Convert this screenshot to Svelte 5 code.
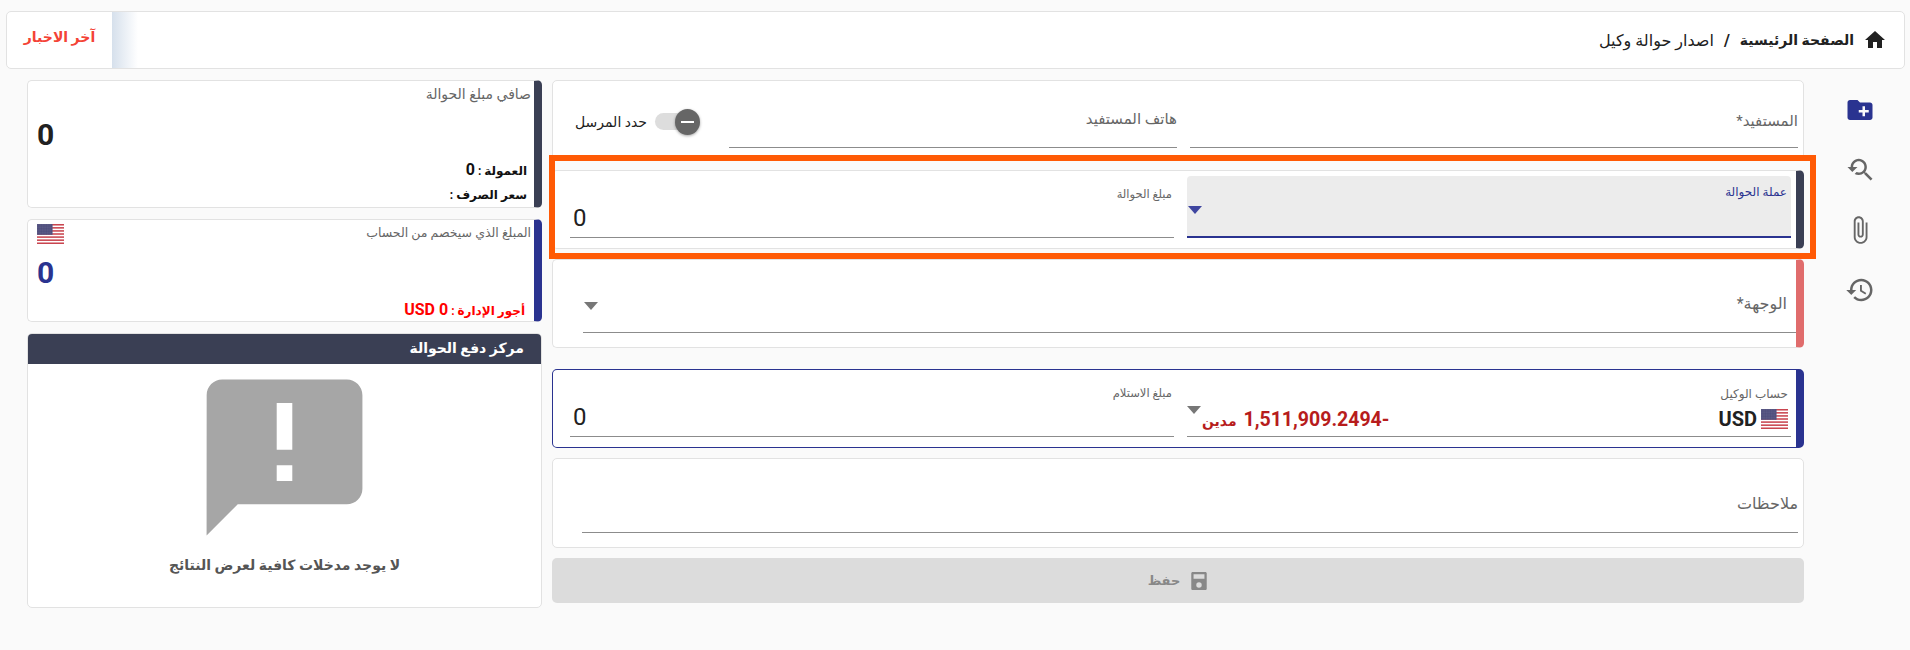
<script>
  const stripes = [0, 1, 2, 3, 4, 5, 6];
</script>

{#snippet flag()}
  <svg class="flag" viewBox="0 0 26 20" preserveAspectRatio="none" aria-hidden="true">
    <defs>
      <pattern id="stars" width="1.6" height="1.6" patternUnits="userSpaceOnUse">
        <rect width="1.6" height="1.6" fill="#3c3b6e" />
        <rect x="0.4" y="0.4" width="0.7" height="0.7" fill="#b9bad0" />
      </pattern>
    </defs>
    <rect width="26" height="20" fill="#fff" />
    {#each stripes as s}
      <rect y={s * 3.08} width="26" height="1.54" fill="#c9454f" />
    {/each}
    <rect width="15" height="10.8" fill="url(#stars)" />
  </svg>
{/snippet}

<div class="page" dir="rtl">
  <header class="topbar">
    <nav class="crumbs">
      <svg class="home" viewBox="0 0 24 24"><path d="M10 20v-6h4v6h5v-8h3L12 3 2 12h3v8z" /></svg>
      <b>الصفحة الرئيسية</b>
      <span class="sep">/</span>
      <span class="current">اصدار حوالة وكيل</span>
    </nav>
    <div class="fade"></div>
    <div class="news">آخر الاخبار</div>
  </header>

  <div class="content">
    <aside class="rail">
      <svg class="navy" viewBox="0 0 24 24"><path d="M20 6h-8l-2-2H4c-1.11 0-1.99.89-1.99 2L2 18c0 1.11.89 2 2 2h16c1.11 0 2-.89 2-2V8c0-1.11-.89-2-2-2zm-1 8h-3v3h-2v-3h-3v-2h3V9h2v3h3v2z" /></svg>
      <svg viewBox="0 0 24 24"><path d="M17.01 14h-.8l-.27-.27c.98-1.14 1.57-2.61 1.57-4.23 0-3.59-2.91-6.5-6.5-6.5s-6.5 3-6.5 6.5H2l3.84 4 4.16-4H6.51C6.51 7 8.53 5 11.01 5s4.5 2.01 4.5 4.5c0 2.48-2.02 4.5-4.5 4.5-.65 0-1.26-.14-1.82-.38L7.71 15.1c.97.57 2.09.9 3.3.9 1.61 0 3.08-.59 4.22-1.57l.27.27v.79l5.01 5L21.99 19l-4.98-5z" /></svg>
      <svg viewBox="0 0 24 24"><path d="M16.5 6v11.5c0 2.21-1.79 4-4 4s-4-1.79-4-4V5c0-1.38 1.12-2.5 2.5-2.5s2.5 1.12 2.5 2.5v10.5c0 .55-.45 1-1 1s-1-.45-1-1V6H10v9.5c0 1.38 1.12 2.5 2.5 2.5s2.5-1.12 2.5-2.5V5c0-2.21-1.79-4-4-4S7 2.79 7 5v12.5c0 3.04 2.46 5.5 5.5 5.5s5.5-2.46 5.5-5.5V6h-1.5z" /></svg>
      <svg viewBox="0 0 24 24"><path d="M13 3c-4.97 0-9 4.03-9 9H1l3.89 3.89.07.14L9 12H6c0-3.87 3.13-7 7-7s7 3.13 7 7-3.13 7-7 7c-1.93 0-3.68-.79-4.94-2.06l-1.42 1.42C8.27 19.99 10.51 21 13 21c4.97 0 9-4.03 9-9s-4.03-9-9-9zm-1 5v5l4.28 2.54.72-1.21-3.5-2.08V8H12z" /></svg>
    </aside>

    <main class="form">
      <section class="card beneficiary">
        <div class="field big wide"><label>المستفيد*</label></div>
        <div class="field big phone"><label>هاتف المستفيد</label></div>
        <div class="sender">
          <div class="toggle"><span class="track"></span><span class="knob"></span></div>
          <span>حدد المرسل</span>
        </div>
      </section>

      <div class="marked">
        <section class="card barred dark currency">
          <div class="field select focused">
            <label>عملة الحوالة</label>
            <span class="arrow"></span>
          </div>
          <div class="field amount">
            <label>مبلغ الحوالة</label>
            <div class="num">0</div>
          </div>
        </section>
        <div class="outline"></div>
      </div>

      <section class="card barred rose destination">
        <div class="field big full">
          <label>الوجهة*</label>
          <span class="arrow"></span>
        </div>
      </section>

      <section class="card barred navybar agent">
        <div class="field select">
          <label>حساب الوكيل</label>
          <div class="account">
            {@render flag()}
            <b class="usd">USD</b>
            <span class="balance"><b>-1,511,909.2494</b> <b class="debit">مدين</b></span>
          </div>
          <span class="arrow"></span>
        </div>
        <div class="field amount">
          <label>مبلغ الاستلام</label>
          <div class="num">0</div>
        </div>
      </section>

      <section class="card notes">
        <div class="field big full"><label>ملاحظات</label></div>
      </section>

      <button class="save" disabled>
        <svg viewBox="0 0 18 22"><path d="M2 1h14c.8 0 1.5.7 1.5 1.500v17c0 .8-.7 1.500-1.500 1.500H2c-.8 0-1.500-.7-1.500-1.500v-17C.5 1.700 1.200 1 2 1zm1 2.500v5h12v-5zM9 12.500a3 3 0 1 0 0 6 3 3 0 0 0 0-6z" /></svg>
        <span>حفظ</span>
      </button>
    </main>

    <aside class="summary">
      <section class="card barred dark net">
        <div class="title">صافي مبلغ الحوالة</div>
        <div class="total">0</div>
        <div class="meta">العمولة : <span class="digit">0</span></div>
        <div class="meta">سعر الصرف :</div>
      </section>

      <section class="card barred navybar deduct">
        <div class="title">المبلغ الذي سيخصم من الحساب</div>
        <div class="flagcorner">{@render flag()}</div>
        <div class="total blue">0</div>
        <div class="meta red">أجور الإدارة : <span class="digit" dir="ltr">USD 0</span></div>
      </section>

      <section class="card center">
        <h3>مركز دفع الحوالة</h3>
        <svg class="empty" viewBox="0 0 24 24"><path d="M20 2H4c-1.100 0-1.990.9-1.990 2L2 22l4-4h14c1.100 0 2-.9 2-2V4c0-1.100-.9-2-2-2zm-7 9h-2V5h2v6zm0 4h-2v-2h2v2z" /></svg>
        <p>لا يوجد مدخلات كافية لعرض النتائج</p>
      </section>
    </aside>
  </div>
</div>

<style>
  :global(body) {
    background: #fafafa;
    font-family: Roboto, "Liberation Sans", "DejaVu Sans", sans-serif;
    color: #212121;
  }

  .page {
    padding: 11px 5px 0 6px;
    height: 639px;
  }

  .topbar {
    height: 58px;
    box-sizing: border-box;
    background: #fff;
    border: 1px solid #e2e2e2;
    border-radius: 5px;
    display: flex;
    align-items: center;
    padding-right: 17px;
  }

  .crumbs {
    display: flex;
    align-items: center;
    gap: 10px;
    font-size: 14px;
    flex: 1;
  }

  .current {
    font-size: 16px;
  }

  .home {
    width: 24px;
    height: 24px;
    fill: #212121;
    margin-left: -1px;
  }

  .sep {
    font-weight: 700;
    font-size: 16px;
  }

  .fade {
    width: 26px;
    height: 100%;
    background: linear-gradient(to left, #fff, #d6e0ec);
  }

  .news {
    width: 105px;
    text-align: center;
    color: #f44336;
    font-size: 14px;
    font-weight: 700;
    padding-bottom: 6px;
  }

  .content {
    display: flex;
    margin-top: 11px;
    padding-left: 21px;
  }

  .rail {
    width: 101px;
    flex: none;
    display: flex;
    flex-direction: column;
    align-items: center;
    gap: 30px;
    padding-top: 15px;
    box-sizing: border-box;
    padding-left: 11px;
  }

  .rail svg {
    width: 30px;
    height: 30px;
    fill: #666;
  }

  .rail svg.navy {
    fill: #2a3390;
  }

  .form {
    width: 1252px;
    flex: none;
    display: flex;
    flex-direction: column;
    gap: 10px;
  }

  .summary {
    width: 515px;
    flex: none;
    margin-right: 10px;
    display: flex;
    flex-direction: column;
    gap: 11px;
  }

  .card {
    box-sizing: border-box;
    background: #fff;
    border: 1px solid #e2e2e2;
    border-radius: 5px;
    position: relative;
  }

  .barred {
    border-right: 8px solid;
  }

  .dark {
    border-right-color: #3a3f54;
  }

  .rose {
    border-right-color: #e06c6c;
  }

  .navybar {
    border-right-color: #2a3390;
  }

  /* form rows */
  .beneficiary {
    height: 80px;
    display: flex;
    align-items: flex-start;
    padding: 0 5px;
  }

  .field {
    position: relative;
    box-sizing: border-box;
    border-bottom: 1px solid #8c8c8c;
    display: flex;
    flex-direction: column;
  }

  .field label {
    color: #666;
    font-size: 12px;
  }

  .field.big label {
    font-size: 15px;
  }

  .wide {
    width: 608px;
    height: 67px;
    padding: 31px 0 0 0;
    margin-left: 13px;
  }

  .phone {
    width: 448px;
    height: 67px;
    padding: 29px 0 0 0;
  }

  .sender {
    flex: 1;
    display: flex;
    align-items: center;
    gap: 8px;
    font-size: 14px;
    font-weight: 500;
    height: 80px;
    margin-top: 1px;
    padding-right: 29px;
  }

  .toggle {
    position: relative;
    width: 45px;
    height: 26px;
    flex: none;
  }

  .track {
    position: absolute;
    left: 0;
    right: 9px;
    top: 4px;
    bottom: 5px;
    background: #ddd;
    border-radius: 9px;
  }

  .knob {
    position: absolute;
    right: 0;
    left: 20px;
    top: 0;
    bottom: 0;
    border-radius: 50%;
    background: #666;
    box-shadow: 0 1px 3px rgba(0, 0, 0, 0.35);
  }

  .knob::after {
    content: "";
    position: absolute;
    left: 6px;
    right: 6px;
    top: 12px;
    height: 2px;
    background: #fff;
  }

  .marked {
    position: relative;
  }

  .outline {
    position: absolute;
    top: -15px;
    bottom: -10px;
    left: -3px;
    right: -12px;
    border: 6px solid #ff5a05;
    pointer-events: none;
  }

  .currency,
  .agent {
    height: 79px;
    display: flex;
    align-items: flex-start;
    padding: 0 5px 0 17px;
  }

  .select {
    width: 604px;
    margin-left: 13px;
    flex: none;
    padding: 0 4px;
  }

  .currency .select {
    height: 62px;
    margin-top: 5px;
    background: #ececec;
    border-radius: 4px 4px 0 0;
    border-bottom: 2px solid #2a3390;
    padding-top: 9px;
  }

  .focused label {
    color: #2a3390;
  }

  .amount {
    flex: 1;
    padding: 16px 2px 0 0;
    height: 67px;
  }

  .amount label {
    font-size: 11.500px;
  }

  .num {
    direction: ltr;
    text-align: left;
    font-size: 24px;
    line-height: 28px;
    margin-top: 3px;
    padding-left: 3px;
  }

  .arrow {
    position: absolute;
    left: 1px;
    top: 30px;
    width: 0;
    height: 0;
    border: 7px solid transparent;
    border-top: 8px solid #777;
    border-bottom: 0;
  }

  .focused .arrow {
    border-top-color: #3f46a0;
  }

  .destination {
    height: 89px;
    padding: 0 0 0 30px;
  }

  .full {
    height: 73px;
    padding: 34px 9px 0 0;
  }

  .destination label {
    font-size: 16px !important;
  }

  .destination .arrow {
    top: 42px;
    left: 1px;
  }

  .agent {
    border-color: #2a3390;
    margin-top: 11px;
  }

  .agent .select {
    height: 67px;
    padding: 17px 3px 0 0;
  }

  .agent .arrow {
    top: 36px;
    left: 0;
  }

  .account {
    display: flex;
    align-items: center;
    gap: 4px;
    font-size: 18px;
    margin-top: 6px;
  }

  .flag {
    width: 27px;
    height: 20px;
    display: block;
    flex: none;
  }

  .usd {
    font-size: 20px;
  }

  .balance {
    color: #b71c1c;
    margin-right: auto;
    margin-left: 15px;
    font-size: 19.500px;
    white-space: nowrap;
  }

  .debit {
    font-size: 14px;
    margin-right: 2px;
  }

  .notes {
    height: 90px;
    padding: 0 5px 0 29px;
  }

  .notes .full {
    height: 74px;
    padding-top: 35px;
    padding-right: 0;
  }

  .notes label {
    font-size: 16px !important;
  }

  .save {
    height: 45px;
    border: 0;
    border-radius: 5px;
    background: #dcdcdc;
    color: #888;
    display: flex;
    align-items: center;
    justify-content: center;
    gap: 10px;
    padding: 0;
    font: inherit;
    font-size: 13px;
    font-weight: 700;
  }

  .save svg {
    width: 18px;
    height: 20px;
    fill: #888;
    fill-rule: evenodd;
  }

  /* left summary */
  .net {
    height: 128px;
    padding: 4px 3px 0 0;
  }

  .deduct {
    height: 103px;
    padding: 4px 3px 0 0;
  }

  .title {
    color: #666;
    font-size: 14px;
    line-height: 18px;
  }

  .deduct .title {
    font-size: 12.500px;
  }

  .total {
    direction: ltr;
    text-align: left;
    padding-left: 9px;
    font-size: 30px;
    font-weight: 700;
    line-height: 36px;
    margin-top: 14px;
  }

  .deduct .total {
    margin-top: 13px;
  }

  .blue {
    color: #2a3390;
  }

  .meta {
    font-size: 12px;
    font-weight: 700;
    color: #111;
    padding-right: 4px;
    line-height: 24px;
    margin-top: 0;
  }

  .net .total + .meta {
    margin-top: 5px;
  }

  .digit {
    font-size: 16px;
  }

  .red {
    color: #f00;
    margin-top: 7px;
    padding-right: 6px;
  }

  .flagcorner {
    position: absolute;
    left: 9px;
    top: 4px;
  }

  .center {
    height: 275px;
    overflow: hidden;
    display: flex;
    flex-direction: column;
    align-items: center;
  }

  .center h3 {
    align-self: stretch;
    margin: -1px -1px 0;
    height: 31px;
    background: #3a3f54;
    color: #fff;
    font-size: 14px;
    line-height: 30px;
    padding-right: 18px;
    font-weight: 700;
  }

  .empty {
    width: 187px;
    height: 187px;
    fill: #a6a6a6;
    flex: none;
  }

  .center p {
    margin: 6px 0 0;
    font-size: 14px;
    font-weight: 700;
    color: #555;
  }
</style>
